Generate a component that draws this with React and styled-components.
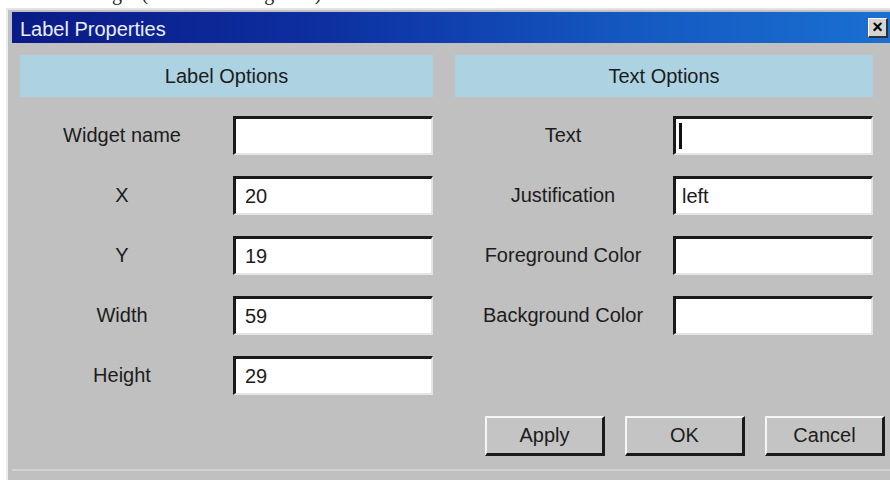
import styled, { createGlobalStyle } from 'styled-components'

const GlobalStyle = createGlobalStyle`
    html, body {
        margin: 0;
        padding: 0;
        background: #ffffff;
        overflow: hidden;
    }
    body {
        font-family: "Liberation Sans", Arial, sans-serif;
    }
`

// the line of document text that runs above the dialog, mostly scrolled off
const Caption = styled.div`
    height: 8px;
    overflow: hidden;
    font-family: "Liberation Serif", "Times New Roman", serif;
    font-size: 20px;
    line-height: 20px;
    color: #222;
    white-space: nowrap;

    span {
        display: block;
        margin-top: -17px;
        padding-left: 2px;
    }
`

const Window = styled.div`
    margin-left: 6px;
    width: 878px;
    padding: 2px 4px 10px 4px;
    background: #c0c0c0;
    border-top: 2px solid #e4e4e4;
    border-left: 2px solid #ececec;
`

const TitleBar = styled.div`
    height: 31px;
    display: flex;
    align-items: center;
    justify-content: space-between;
    padding: 0 2px 0 8px;
    background: linear-gradient(90deg, #0a1a86 0%, #0d2fa0 35%, #1458c0 70%, #1a70d2 100%);
`

const Title = styled.span`
    color: #eceefa;
    font-size: 20px;
    padding-top: 3px;
`

const CloseButton = styled.div`
    width: 17px;
    height: 17px;
    display: flex;
    align-items: center;
    justify-content: center;
    background: #d4d4d4;
    border-top: 1px solid #fafafa;
    border-left: 1px solid #fafafa;
    border-right: 2px solid #303030;
    border-bottom: 2px solid #303030;
    font-size: 18px;
    font-weight: bold;
    line-height: 1;
    color: #000;
`

const Body = styled.div`
    padding: 12px 5px 13px 8px;
    border-bottom: 2px solid #d2d2d2;
`

const Columns = styled.div`
    display: grid;
    grid-template-columns: 413px 418px;
    column-gap: 22px;
    align-items: start;
`

const Section = styled.div`
    display: flex;
    flex-direction: column;
`

const Header = styled.div`
    height: 42px;
    display: flex;
    align-items: center;
    justify-content: center;
    background: #add3e3;
    color: #1c1c1c;
    font-size: 20px;
    margin-bottom: 19px;
`

const Rows = styled.div`
    display: grid;
    grid-template-columns: 1fr 200px;
    row-gap: 21px;
    align-items: center;
`

const Label = styled.div`
    text-align: center;
    font-size: 20px;
    color: #1c1c1c;
    padding-right: ${p => p.$inset}px;
`

const Field = styled.div`
    height: 39px;
    box-sizing: border-box;
    display: flex;
    align-items: center;
    padding-left: ${p => p.$pad || 9}px;
    background: #ffffff;
    border-top: 3px solid #1a1a1a;
    border-left: 3px solid #1a1a1a;
    border-right: 2px solid #e4e4e4;
    border-bottom: 2px solid #e4e4e4;
    font-size: 20px;
    color: #1c1c1c;
`

const Caret = styled.span`
    display: inline-block;
    width: 3px;
    height: 26px;
    background: #111;
`

const Footer = styled.div`
    display: flex;
    justify-content: flex-end;
    gap: 20px;
    margin-top: 21px;
`

const Button = styled.div`
    width: 120px;
    height: 40px;
    box-sizing: border-box;
    display: flex;
    align-items: center;
    justify-content: center;
    background: #c4c4c4;
    border-top: 2px solid #f6f6f6;
    border-left: 2px solid #f6f6f6;
    border-right: 3px solid #1a1a1a;
    border-bottom: 3px solid #1a1a1a;
    font-size: 20px;
    color: #1c1c1c;
`

const labelFields = [
    { label: 'Widget name', value: '' },
    { label: 'X', value: '20' },
    { label: 'Y', value: '19' },
    { label: 'Width', value: '59' },
    { label: 'Height', value: '29' },
]

const textFields = [
    { label: 'Text', caret: true },
    { label: 'Justification', value: 'left', pad: 6 },
    { label: 'Foreground Color', value: '' },
    { label: 'Background Color', value: '' },
]

function FieldList({ fields, inset }) {
    return (
        <Rows>
            {fields.map(f => (
                <FieldRow key={f.label} field={f} inset={inset} />
            ))}
        </Rows>
    )
}

function FieldRow({ field, inset }) {
    return (
        <>
            <Label $inset={inset}>{field.label}</Label>
            <Field $pad={field.caret ? 3 : field.pad}>
                {field.caret ? <Caret /> : field.value}
            </Field>
        </>
    )
}

export default function App() {
    return (
        <>
            <GlobalStyle />
            <Caption>
                <span>each new widget (as shown in Figure 3)</span>
            </Caption>
            <Window>
                <TitleBar>
                    <Title>Label Properties</Title>
                    <CloseButton>×</CloseButton>
                </TitleBar>
                <Body>
                    <Columns>
                        <Section>
                            <Header>Label Options</Header>
                            <FieldList fields={labelFields} inset={9} />
                        </Section>
                        <Section>
                            <Header>Text Options</Header>
                            <FieldList fields={textFields} inset={2} />
                        </Section>
                    </Columns>
                    <Footer>
                        <Button>Apply</Button>
                        <Button>OK</Button>
                        <Button>Cancel</Button>
                    </Footer>
                </Body>
            </Window>
        </>
    )
}
